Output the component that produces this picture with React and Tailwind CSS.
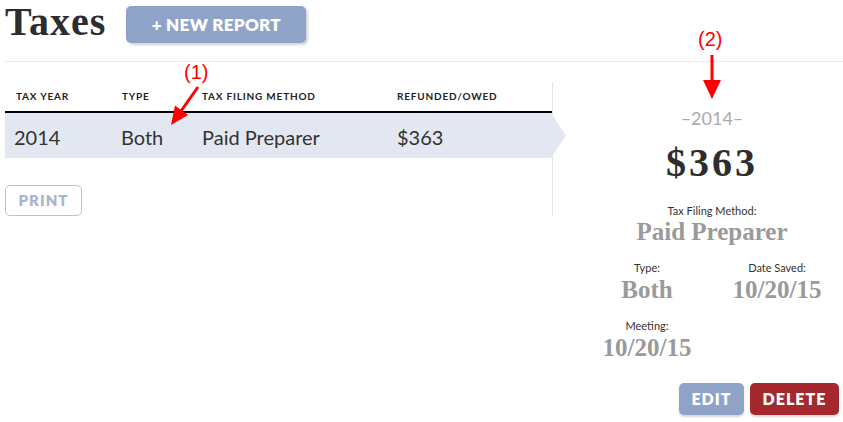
import React from "react";

const sans = "font-['Lato','Open_Sans',sans-serif]";
const serif = "font-['Liberation_Serif','Times_New_Roman',serif]";

function Annotations() {
  return (
    <div className="pointer-events-none absolute inset-0">
      <div className="absolute left-[184px] top-[61px] font-['Liberation_Sans',Arial,sans-serif] text-[20px] leading-[22px] text-[#f00]">
        (1)
      </div>
      <div className="absolute left-[698px] top-[28px] font-['Liberation_Sans',Arial,sans-serif] text-[20px] leading-[22px] text-[#f00]">
        (2)
      </div>
      <svg className="absolute left-0 top-0" width="843" height="422">
        {/* arrow 1 */}
        <line x1="198" y1="87" x2="181" y2="111" stroke="#f00" strokeWidth="3" />
        <polygon points="171,125 188,115 175,105.5" fill="#f00" />
        {/* arrow 2 */}
        <line x1="712" y1="55" x2="712" y2="81" stroke="#f00" strokeWidth="3" />
        <polygon points="703,80 721,80 712,99" fill="#f00" />
      </svg>
    </div>
  );
}

function Detail({ label, value }) {
  return (
    <div className="flex flex-col items-center">
      <p className={`${sans} text-[11px] leading-[14px] text-[#333]`}>{label}</p>
      <p className={`${serif} mt-[1px] text-[25px] leading-[28px] font-bold text-[#9a9a9a]`}>
        {value}
      </p>
    </div>
  );
}

function App() {
  return (
    <div className="relative h-[422px] w-[843px] overflow-hidden bg-white">
      {/* header */}
      <div className="flex h-[61px] items-start pl-[5px]">
        <h1 className={`${serif} mt-[2px] text-[40px] leading-[40px] font-bold tracking-[1px] text-[#2d2d2d]`}>
          Taxes
        </h1>
        <button
          className={`${sans} ml-[20px] mt-[6px] h-[37px] w-[180px] rounded-[5px] bg-[#8fa3c9] text-[17px] font-extrabold tracking-[0.3px] text-white shadow-[2px_2px_3px_rgba(0,0,0,0.18)]`}
        >
          + NEW REPORT
        </button>
      </div>

      <div className="ml-[5px] flex border-t border-[#ebebeb]">
        {/* left column */}
        <div className="mt-[20px] w-[548px] self-start border-r border-[#e6e6e6]">
          <div
            className={`${sans} flex h-[31px] items-center border-b-[2px] border-black text-[10px] font-bold tracking-[0.8px] text-[#222]`}
          >
            <div className="w-[107px] pl-[11px]">TAX YEAR</div>
            <div className="w-[80px] pl-[10px]">TYPE</div>
            <div className="w-[195px] pl-[10px]">TAX FILING METHOD</div>
            <div className="pl-[10px]">REFUNDED/OWED</div>
          </div>
          <div
            className={`${sans} relative flex h-[45px] w-[546px] items-center bg-[#e3e7f1] pt-[2px] text-[20px] text-[#333]`}
          >
            <div className="w-[107px] pl-[9px]">2014</div>
            <div className="w-[80px] pl-[9px]">Both</div>
            <div className="w-[195px] pl-[10px]">Paid Preparer</div>
            <div className="pl-[10px]">$363</div>
            <div className="absolute left-full top-0 h-[45px] w-[15px] bg-[#e3e7f1] [clip-path:polygon(0_0,100%_50%,0_100%)]" />
          </div>
          <button
            className={`${sans} mt-[27px] h-[31px] w-[77px] rounded-[5px] border-[1.5px] border-[#b8c2da] text-[15px] font-extrabold tracking-[1px] text-[#a9b4cf]`}
          >
            PRINT
          </button>
        </div>

        {/* right column */}
        <div className="flex w-[290px] flex-col items-center pl-[29px] pr-[1px] pt-[46px]">
          <p className={`${sans} text-[18px] leading-[20px] text-[#aaa]`}>–2014–</p>
          <p className={`${serif} mt-[11px] text-[40px] leading-[48px] font-bold tracking-[3px] text-[#2d2d2d]`}>
            $363
          </p>
          <p className={`${sans} mt-[17px] text-[11px] leading-[14px] text-[#333]`}>
            Tax Filing Method:
          </p>
          <p className={`${serif} text-[25px] leading-[28px] font-bold text-[#9a9a9a]`}>
            Paid Preparer
          </p>
          <div className="mt-[15px] grid w-[260px] grid-cols-2 gap-y-[15px]">
            <Detail label="Type:" value="Both" />
            <Detail label="Date Saved:" value="10/20/15" />
            <Detail label="Meeting:" value="10/20/15" />
          </div>
          <div className="mt-[21px] flex w-[260px] justify-end gap-[6px] pr-[3px]">
            <button
              className={`${sans} h-[32px] w-[65px] rounded-[5px] bg-[#8fa3c9] text-[16px] font-extrabold tracking-[1px] text-white shadow-[0_2px_2px_rgba(0,0,0,0.15)]`}
            >
              EDIT
            </button>
            <button
              className={`${sans} h-[32px] w-[89px] rounded-[5px] bg-[#a4282e] text-[16px] font-extrabold tracking-[1px] text-white shadow-[0_2px_2px_rgba(0,0,0,0.15)]`}
            >
              DELETE
            </button>
          </div>
        </div>
      </div>

      <Annotations />
    </div>
  );
}

export default App;
